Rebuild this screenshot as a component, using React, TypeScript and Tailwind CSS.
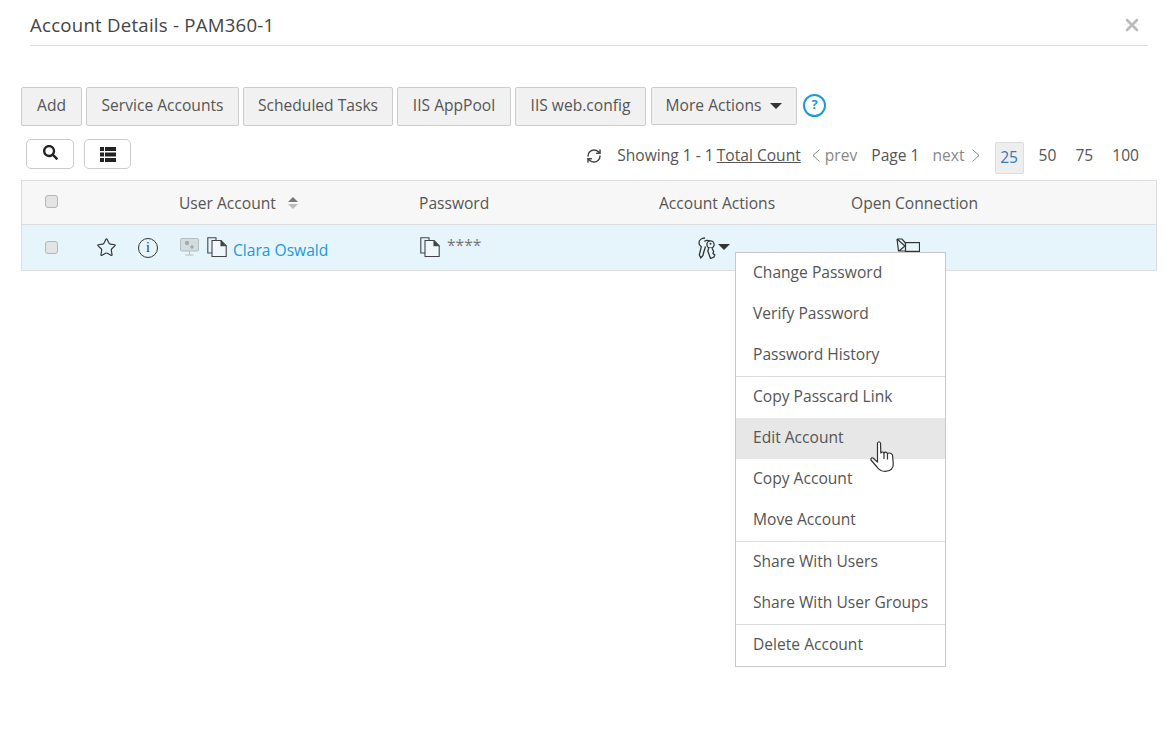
import React from "react";
import { RefreshCw, Star, X } from "lucide-react";
import { FaSearch } from "react-icons/fa";

const TOOLBAR = [
  { label: "Add", width: "w-[61px]" },
  { label: "Service Accounts", width: "w-[153px]" },
  { label: "Scheduled Tasks", width: "w-[150px]" },
  { label: "IIS AppPool", width: "w-[114px]" },
  { label: "IIS web.config", width: "w-[131px]" },
];

const MENU_GROUPS = [
  ["Change Password", "Verify Password", "Password History"],
  ["Copy Passcard Link", "Edit Account", "Copy Account", "Move Account"],
  ["Share With Users", "Share With User Groups"],
  ["Delete Account"],
];

const Caret = () => (
  <span className="inline-block h-0 w-0 border-x-[6px] border-t-[6px] border-x-transparent border-t-[#333]" />
);

const Checkbox = () => (
  <span className="block h-[13px] w-[13px] rounded-[3px] border border-[#b5b5b5] bg-[#e4e4e4]" />
);

const CopyIcon = ({ className }: { className?: string }) => (
  <svg viewBox="0 0 20 20" className={className} fill="none" stroke="#444" strokeWidth="1.1">
    <path d="M5 16H.8V.8H9V3.500" />
    <path d="M5 3.500h9l5.200 5.200V19.500H5z" fill="#fff" fillOpacity="0.4" />
    <path d="M14 3.500v5.200h5.200" fill="#444" />
  </svg>
);

const MonitorIcon = () => (
  <svg viewBox="0 0 19 18" className="h-[18px] w-[19px]" fill="none">
    <rect x="0.500" y="0.500" width="18" height="12.500" rx="1" fill="#d3dcdf" stroke="#b4bcbf" />
    <circle cx="7" cy="5" r="2.200" fill="#a2abae" />
    <circle cx="12" cy="9" r="1.800" fill="#a2abae" />
    <path d="M9.500 13v3.500M5.500 17h8" stroke="#b4bcbf" />
  </svg>
);

const KeysIcon = () => (
  <svg viewBox="0 0 20 22" className="h-[22px] w-[20px]" fill="none" stroke="#333" strokeWidth="1.300">
    <path d="M7 1C3.500 1 1 3.200 1 6c0 1.700 1 3 2.300 3.800L1.300 18l1.500 2.800 2.200-2.300.5-2.500 2-6.500" />
    <path d="M6.500 4.500C8 2.800 11 3 12.500 5" />
    <circle cx="12.500" cy="7.500" r="3.600" fill="#e6f4fc" />
    <path d="M10.800 11 9.800 14l2.700 7.500 3.500-1.500.8-2-1.800-1.500.6-2-1.600-3.500" fill="#e6f4fc" />
    <circle cx="12.500" cy="6.800" r="1" fill="#333" stroke="none" />
  </svg>
);

const ConnectionIcon = () => (
  <svg viewBox="0 0 24 14" className="h-[14px] w-[24px]" fill="none" stroke="#333" strokeWidth="1.200">
    <path d="M1 1h5l3.500 4M1 1l1.500 12h6.500M1 1l8 7-6 5" />
    <rect x="9.500" y="4.600" width="14" height="8.800" fill="#e6f4fc" />
  </svg>
);

const ListIcon = () => (
  <svg viewBox="0 0 16 15" className="h-[15px] w-[16px]" fill="#222">
    <rect x="0" y="0" width="4" height="4" />
    <rect x="5" y="0" width="11" height="4" />
    <rect x="0" y="5.500" width="4" height="4" />
    <rect x="5" y="5.500" width="11" height="4" />
    <rect x="0" y="11" width="4" height="4" />
    <rect x="5" y="11" width="11" height="4" />
  </svg>
);

const Chevron = ({ dir }: { dir: "left" | "right" }) => (
  <svg viewBox="0 0 8 13" className="h-[13px] w-[8px]" fill="none" stroke="#888" strokeWidth="1">
    <path d={dir === "left" ? "M7.500 .5 1 6.500l6.500 6" : "M.5 .5 7 6.500l-6.500 6"} />
  </svg>
);

const HandCursor = ({ className }: { className?: string }) => (
  <svg viewBox="0 0 24 32" className={className} fill="#fff" stroke="#333" strokeWidth="1.200" strokeLinejoin="round">
    <path d="M7.500 3Q9 .5 10.500 3L10.800 13Q12.500 11 14 13Q15.800 11 17.500 13.500Q20.500 12 22.500 15L23.300 24Q23.300 31 15 31.400Q10 31.400 7 27L1 20Q.5 17.500 3 18L7.500 22Z" />
    <path d="M14 13v6M17.500 13.500v6" fill="none" />
  </svg>
);

export default function App() {
  return (
    <div className="min-h-[740px] w-[1174px] bg-white font-['Open_Sans',sans-serif] text-[15.6px] text-[#555]">
      {/* dialog title */}
      <div className="ml-[30px] mr-[26px] flex h-[46px] items-center justify-between border-b border-[#ddd] pt-[4px]">
        <h1 className="text-[18.600px] tracking-[0.25px] text-[#444]">Account Details - PAM360-1</h1>
        <X size={20} strokeWidth={3.200} className="mr-[6px] text-[#bbb]" />
      </div>

      {/* actions */}
      <div className="ml-[21px] mt-[41px] flex items-center gap-[4px]">
        {TOOLBAR.map((item) => (
          <button
            key={item.label}
            className={`${item.width} h-[39px] rounded-[2px] border border-[#ccc] bg-[#f1f1f1] pb-[1px] text-center`}
          >
            {item.label}
          </button>
        ))}
        <button className="mb-[1px] ml-[1px] flex h-[38px] w-[146px] items-center justify-center gap-[9px] rounded-[2px] border border-[#ccc] bg-[#f1f1f1]">
          More Actions
          <Caret />
        </button>
        <span className="mb-[3px] ml-[2px] flex h-[23px] w-[23px] items-center justify-center rounded-full border-2 border-[#1c9ad6] text-[13px] font-bold text-[#1c9ad6]">
          ?
        </span>
      </div>

      {/* search and paging */}
      <div className="ml-[26px] mr-[35px] mt-[13px] flex h-[35px] items-start justify-between">
        <div className="flex gap-[10px]">
          <button className="flex h-[30px] w-[48px] items-center justify-center rounded-[5px] border border-[#ccc] pb-[3px]">
            <FaSearch size={15} className="text-[#222]" />
          </button>
          <button className="flex h-[30px] w-[47px] items-center justify-center rounded-[5px] border border-[#ccc]">
            <ListIcon />
          </button>
        </div>
        <div className="flex h-[35px] items-start">
          <div className="flex h-[32px] items-center pt-[1px]">
            <RefreshCw size={16} strokeWidth={2.200} className="mr-[15px] text-[#444]" />
            <span>Showing 1 - 1</span>
            <span className="ml-[3px] underline">Total Count</span>
            <span className="ml-[11px]">
              <Chevron dir="left" />
            </span>
            <span className="ml-[5px] text-[#888]">prev</span>
            <span className="ml-[14px]">Page 1</span>
            <span className="ml-[13px] text-[#888]">next</span>
            <span className="ml-[7px]">
              <Chevron dir="right" />
            </span>
          </div>
          <div className="mt-[3px] flex h-[32px] items-start">
            <span className="ml-[15px] flex h-[32px] w-[29px] items-center justify-center rounded-[2px] border border-[#ddd] bg-[#eee] text-[#337ab7]">
              25
            </span>
            <span className="ml-[15px] mt-[2px]">50</span>
            <span className="ml-[19px] mt-[2px]">75</span>
            <span className="ml-[19px] mt-[2px]">100</span>
          </div>
        </div>
      </div>

      {/* table */}
      <div className="ml-[21px] mt-[6px] w-[1136px] border border-[#ddd]">
        <div className="grid h-[44px] grid-cols-[157px_240px_240px_192px_1fr] items-center border-b border-[#ddd] bg-[#f7f7f7] pt-[2px]">
          <div className="-mt-[5px] pl-[23px]">
            <Checkbox />
          </div>
          <div className="flex items-center gap-[12px]">
            User Account
            <span className="flex flex-col gap-[2px]">
              <span className="h-0 w-0 border-x-[5px] border-b-[5px] border-x-transparent border-b-[#777]" />
              <span className="h-0 w-0 border-x-[5px] border-t-[5px] border-x-transparent border-t-[#bbb]" />
            </span>
          </div>
          <div>Password</div>
          <div>Account Actions</div>
          <div>Open Connection</div>
        </div>
        <div className="grid h-[45px] grid-cols-[157px_240px_240px_192px_1fr] items-center bg-[#e6f4fc]">
          <div className="flex items-center pl-[23px]">
            <Checkbox />
            <Star size={21} strokeWidth={1.300} className="ml-[38px] text-[#333]" />
            <span className="ml-[21px] flex h-[20px] w-[20px] items-center justify-center rounded-full border border-[#333] font-['Liberation_Serif',serif] text-[14px] leading-none text-[#333]">
              i
            </span>
          </div>
          <div className="ml-[1px] flex items-center">
            <MonitorIcon />
            <CopyIcon className="ml-[8px] h-[20px] w-[20px]" />
            <span className="ml-[6px] mt-[7px] text-[#1c9ad6]">Clara Oswald</span>
          </div>
          <div className="flex items-center">
            <CopyIcon className="ml-[1px] h-[20px] w-[20px]" />
            <span className="-mt-[3px] ml-[7px] text-[#777]">****</span>
          </div>
          <div className="relative flex items-center pl-[39px]">
            <KeysIcon />
            <span className="-mt-[2px] flex">
              <Caret />
            </span>
            {/* dropdown sits over the table row */}
            <div className="absolute left-[76px] top-[15px] z-10 w-[211px] border border-[#c8c8c8] bg-white">
              {MENU_GROUPS.map((group, i) => (
                <div key={i} className={i > 0 ? "border-t border-[#ddd]" : ""}>
                  {group.map((item) => (
                    <div
                      key={item}
                      className={`flex h-[41px] items-center pl-[17px] ${item === "Edit Account" ? "bg-[#e7e7e7]" : ""}`}
                    >
                      {item}
                    </div>
                  ))}
                </div>
              ))}
              <HandCursor className="absolute left-[134px] top-[187px] h-[32px] w-[24px]" />
            </div>
          </div>
          <div className="-mt-[6px] pl-[45px]">
            <ConnectionIcon />
          </div>
        </div>
      </div>
    </div>
  );
}
